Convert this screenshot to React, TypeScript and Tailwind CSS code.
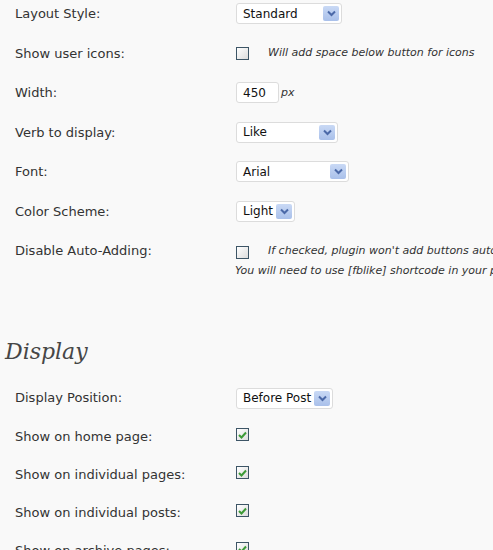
import type { ReactNode } from 'react'

const font = { fontFamily: '"DejaVu Sans", Verdana, sans-serif' }

function Arrow() {
  return (
    <span className="flex h-[15px] w-[16px] shrink-0 items-center justify-center rounded-[2px] bg-[linear-gradient(#c9d9f5,#a9c0ea)]">
      <svg width="9" height="7" viewBox="0 0 9 7">
        <path d="M1 1.5 L4.5 5 L8 1.5" fill="none" stroke="#4b69a8" strokeWidth="2" />
      </svg>
    </span>
  )
}

function Select({ value, width }: { value: string; width: number }) {
  return (
    <div
      className="flex h-[21px] items-center justify-between rounded-[3px] border border-[#dcdcdc] bg-white pr-[2px] pl-[6px] text-[12px] text-[#111]"
      style={{ width }}
    >
      <span>{value}</span>
      <Arrow />
    </div>
  )
}

function Checkbox({ checked }: { checked?: boolean }) {
  return (
    <span className="flex h-[13px] w-[13px] shrink-0 items-center justify-center border border-[#3d5566] bg-[linear-gradient(135deg,#ffffff,#dcdcdc)]">
      {checked && (
        <svg width="9" height="8" viewBox="0 0 9 8">
          <path d="M1 4 L3.5 6.5 L8 1.5" fill="none" stroke="#3c9a36" strokeWidth="2" />
        </svg>
      )}
    </span>
  )
}

function Row({ label, children, h = 'h-[39.5px]' }: { label: string; children: ReactNode; h?: string }) {
  return (
    <div className={`flex items-center ${h}`}>
      <div className="w-[236px] shrink-0 pl-[15px] text-[13px] text-[#333]">{label}</div>
      <div className="flex items-center">{children}</div>
    </div>
  )
}

export default function App() {
  return (
    <div className="h-[550px] w-[493px] overflow-hidden bg-[#f9f9f9]" style={font}>
      <div className="-mt-[6px]">
        <Row label="Layout Style:">
          <Select value="Standard" width={106} />
        </Row>
        <Row label="Show user icons:">
          <Checkbox />
          <span className="ml-[19px] text-[11px] whitespace-nowrap text-[#333] italic">
            Will add space below button for icons
          </span>
        </Row>
        <Row label="Width:">
          <div className="flex h-[21px] w-[43px] items-center rounded-[3px] border border-[#dcdcdc] bg-white pl-[6px] text-[12px] text-[#111]">
            450
          </div>
          <span className="ml-[2px] text-[11px] text-[#333] italic">px</span>
        </Row>
        <Row label="Verb to display:">
          <Select value="Like" width={102} />
        </Row>
        <Row label="Font:">
          <Select value="Arial" width={113} />
        </Row>
        <Row label="Color Scheme:">
          <Select value="Light" width={59} />
        </Row>
        <div className="flex h-[60px] items-start pt-[12px]">
          <div className="w-[236px] shrink-0 pl-[15px] text-[13px] leading-[16px] text-[#333]">Disable Auto-Adding:</div>
          <div className="-ml-[1px] flex flex-col text-[11px] whitespace-nowrap text-[#333] italic">
            <div className="flex h-[16px] items-center">
              <span className="ml-[1px] mt-[2px]">
                <Checkbox />
              </span>
              <span className="ml-[19px]">If checked, plugin won't add buttons automatically.</span>
            </div>
            <div className="mt-[4px]">You will need to use [fblike] shortcode in your posts.</div>
          </div>
        </div>
      </div>
      <h2
        className="mt-[46px] pl-[5px] text-[22px] leading-[30px] text-[#464646] italic"
        style={{ fontFamily: '"DejaVu Serif", Georgia, serif' }}
      >
        Display
      </h2>
      <div className="mt-[11px]">
        <Row label="Display Position:" h="h-[40px]">
          <Select value="Before Post" width={97} />
        </Row>
        <Row label="Show on home page:" h="h-[38px]">
          <span className="-mt-[5px]">
            <Checkbox checked />
          </span>
        </Row>
        <Row label="Show on individual pages:" h="h-[38px]">
          <span className="-mt-[5px]">
            <Checkbox checked />
          </span>
        </Row>
        <Row label="Show on individual posts:" h="h-[38px]">
          <span className="-mt-[5px]">
            <Checkbox checked />
          </span>
        </Row>
        <Row label="Show on archive pages:" h="h-[38px]">
          <span className="-mt-[5px]">
            <Checkbox checked />
          </span>
        </Row>
      </div>
    </div>
  )
}
